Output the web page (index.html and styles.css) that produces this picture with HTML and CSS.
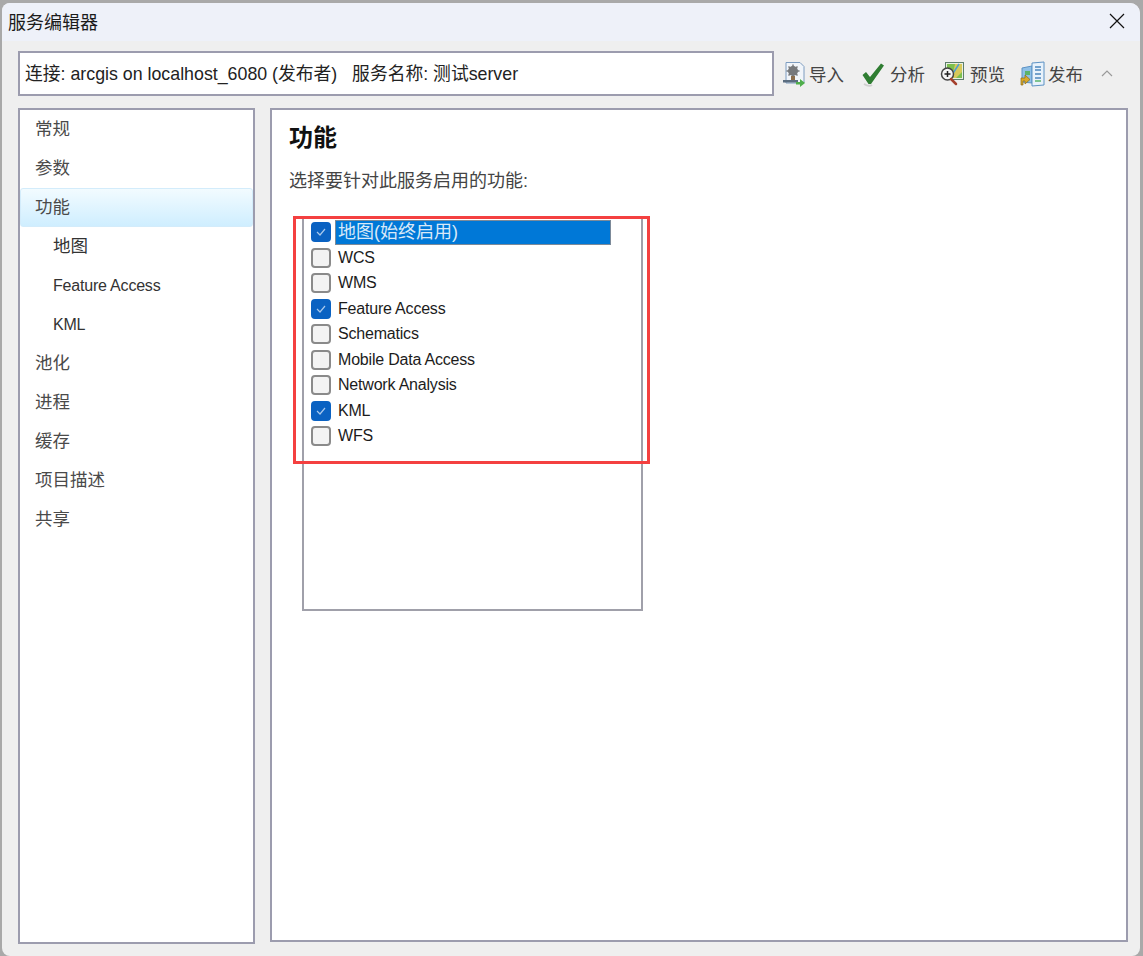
FILE: index.html
```html
<!DOCTYPE html>
<html lang="zh-CN">
<head>
  <meta charset="UTF-8">
  <title>服务编辑器</title>
  <link rel="stylesheet" href="styles.css">
</head>
<body>
  <div class="window">
    <!-- 标题栏 -->
    <div class="titlebar">
      <span class="title">服务编辑器</span>
      <svg class="close" width="16" height="16" viewBox="0 0 16 16"><path d="M1 1 L15 15 M15 1 L1 15" stroke="#111" stroke-width="1.2" fill="none"/></svg>
    </div>

    <div class="content">
      <!-- 连接信息和工具栏 -->
      <div class="topbar">
        <div class="conn">连接: arcgis on localhost_6080 (发布者)&nbsp;&nbsp; 服务名称: 测试server</div>
        <div class="tools">
          <div class="tool tool-import">
            <svg width="24" height="26" viewBox="0 0 24 26">
              <path d="M4 1.5 H18 L22 5.5 V22 H4 Z" fill="#f1f5fa" stroke="#7d9cc0"/>
              <circle cx="11" cy="10" r="5" fill="#77797c"/>
              <circle cx="11" cy="10" r="2" fill="#d8dadc"/>
              <path d="M11 3.5 V16.5 M4.500 10 H17.500 M6.500 5.500 L15.500 14.500 M15.500 5.500 L6.500 14.500" stroke="#77797c" stroke-width="1.500"/>
              <rect x="9" y="15" width="4" height="4" fill="#8d6e4c"/>
              <rect x="1" y="19" width="15" height="2.500" fill="#5b6d80"/>
              <path d="M14 21 H18 V18 L23 22 L18 26 V23.500 H14 Z" fill="#4fae4b"/>
            </svg>
            <span>导入</span>
          </div>
          <div class="tool tool-check">
            <svg width="24" height="26" viewBox="0 0 24 26">
              <path d="M1.500 14 L5 11 L9 16 L20 2.500 L23 4.500 L10 23 H7.500 Z" fill="#2f7d32"/>
              <path d="M3 23 Q8 26 11 24" stroke="#cfcfcf" stroke-width="2" fill="none"/>
            </svg>
            <span>分析</span>
          </div>
          <div class="tool tool-preview">
            <svg width="25" height="26" viewBox="0 0 25 26">
              <rect x="5.500" y="1.500" width="18" height="17" fill="#e9f0e4" stroke="#5d7d6b"/>
              <path d="M7 3 H22 V17 H7 Z" fill="#7cc04e"/>
              <path d="M15 3 H22 V11 L16 17 H12 Z" fill="#d7c95a"/>
              <path d="M19 3 L10 17" stroke="#4c9ed0" stroke-width="1.500"/>
              <circle cx="7.500" cy="13" r="6" fill="#f5f5f5" stroke="#444" stroke-width="1.500"/>
              <path d="M4.500 13 H10.500 M7.500 10 V16" stroke="#222" stroke-width="1.500"/>
              <path d="M11 18 L16 23" stroke="#a5402d" stroke-width="2.500" stroke-linecap="round"/>
            </svg>
            <span>预览</span>
          </div>
          <div class="tool tool-publish">
            <svg width="26" height="26" viewBox="0 0 26 26">
              <path d="M2 7 L12 5 V22 L2 21 Z" fill="#8fc0e8" stroke="#5d92c4"/>
              <rect x="5" y="10" width="5" height="4" fill="#5bb36a"/>
              <path d="M12 2 L24 1 V24 L12 25 Z" fill="#e8f2fb" stroke="#5d92c4"/>
              <path d="M15 6 H21 M15 9 H21 M15 13 H21 M15 17 H21" stroke="#4c86bd" stroke-width="1.500"/>
              <path d="M15 20 H21" stroke="#5bb36a" stroke-width="1.500"/>
              <path d="M1 17 H5 V14 L10 18.500 L5 23 V20 H3 V24 H1 Z" fill="#d9a92b" stroke="#8a6a16" stroke-width=".7"/>
            </svg>
            <span>发布</span>
          </div>
          <svg class="collapse" width="12" height="7" viewBox="0 0 12 7"><path d="M1 6 L6 1 L11 6" stroke="#9a9a9a" stroke-width="1.200" fill="none"/></svg>
        </div>
      </div>

      <div class="panes">
        <!-- 左侧导航 -->
        <ul class="nav">
          <li>常规</li>
          <li>参数</li>
          <li class="active">功能</li>
          <li class="sub sub-cn">地图</li>
          <li class="sub">Feature Access</li>
          <li class="sub">KML</li>
          <li>池化</li>
          <li>进程</li>
          <li>缓存</li>
          <li>项目描述</li>
          <li>共享</li>
        </ul>

        <!-- 功能面板 -->
        <div class="main">
          <h1>功能</h1>
          <p class="hint">选择要针对此服务启用的功能:</p>
          <div class="list">
            <div class="row"><span class="box on"><svg width="12" height="10" viewBox="0 0 12 10"><path d="M2 5 L5 8 L10 2" stroke="#a9c9ec" stroke-width="1.200" fill="none"/></svg></span><span class="label selected">地图(始终启用)</span></div>
            <div class="row"><span class="box"></span><span class="label">WCS</span></div>
            <div class="row"><span class="box"></span><span class="label">WMS</span></div>
            <div class="row"><span class="box on"><svg width="12" height="10" viewBox="0 0 12 10"><path d="M2 5 L5 8 L10 2" stroke="#a9c9ec" stroke-width="1.200" fill="none"/></svg></span><span class="label">Feature Access</span></div>
            <div class="row"><span class="box"></span><span class="label">Schematics</span></div>
            <div class="row"><span class="box"></span><span class="label">Mobile Data Access</span></div>
            <div class="row"><span class="box"></span><span class="label">Network Analysis</span></div>
            <div class="row"><span class="box on"><svg width="12" height="10" viewBox="0 0 12 10"><path d="M2 5 L5 8 L10 2" stroke="#a9c9ec" stroke-width="1.200" fill="none"/></svg></span><span class="label">KML</span></div>
            <div class="row"><span class="box"></span><span class="label">WFS</span></div>
            <!-- 红色标注框 -->
            <div class="redbox"></div>
          </div>
        </div>
      </div>
    </div>
  </div>
</body>
</html>
```

FILE: styles.css
```css
* { box-sizing: border-box; margin: 0; padding: 0; }

html, body { height: 100%; }

body {
  font-family: "Liberation Sans", "Noto Sans CJK SC", sans-serif;
  background: #a9a9a9;
  padding: 3px 3px 0 2px;
  overflow: hidden;
  color: #222;
}

.window {
  height: 100%;
  background: #efefef;
  border-radius: 8px 10px 8px 8px;
  overflow: hidden;
  display: flex;
  flex-direction: column;
}

/* 标题栏 */
.titlebar {
  height: 38px;
  flex: none;
  background: #eef1f9;
  display: flex;
  align-items: center;
  justify-content: space-between;
  padding: 0 15px 2px 6px;
}

.title { font-size: 18px; color: #1b1b1b; }

.content {
  flex: 1;
  padding: 10px 12px 12px 16px;
  display: flex;
  flex-direction: column;
  gap: 12px;
  min-height: 0;
}

/* 顶部 */
.topbar {
  display: flex;
  align-items: center;
  height: 45px;
  flex: none;
}

.conn {
  width: 756px;
  height: 45px;
  background: #fff;
  border: 2px solid #9c9cae;
  padding-left: 5px;
  font-size: 17.800px;
  line-height: 42px;
  color: #222;
  white-space: nowrap;
}

.tools {
  display: flex;
  align-items: center;
  margin-left: 8px;
}

.tool {
  display: flex;
  align-items: center;
  font-size: 17.500px;
  color: #444;
  gap: 3px;
}

.tool-check { margin-left: 17px; gap: 5px; }
.tool-preview { margin-left: 15px; gap: 5px; }
.tool-publish { margin-left: 15px; gap: 2px; }

.collapse { margin-left: 18px; }

/* 下方两栏 */
.panes {
  flex: 1;
  display: flex;
  gap: 15px;
  min-height: 0;
}

.nav {
  width: 237px;
  flex: none;
  background: #fff;
  border: 2px solid #9c9cae;
  list-style: none;
}

.nav li {
  height: 39px;
  line-height: 39px;
  padding-left: 15px;
  font-size: 17.500px;
  color: #4a4a4a;
}

.nav li.sub { padding-left: 33px; color: #333; font-size: 16px; letter-spacing: -0.2px; }

.nav li.sub-cn { font-size: 17.500px; letter-spacing: 0; }

.nav li.active {
  background: linear-gradient(#f2fbff, #cfeeff);
  border: 1px solid #d3ecfb;
  border-radius: 3px;
  line-height: 37px;
  padding-left: 14px;
}

.main {
  flex: 1;
  height: 834px;
  background: #fff;
  border: 2px solid #9c9cae;
  padding: 13px 17px;
}

.main h1 {
  font-size: 24px;
  line-height: 30px;
  color: #111;
}

.hint {
  margin-top: 16px;
  font-size: 18px;
  line-height: 24px;
  color: #444;
}

/* 复选列表 */
.list {
  position: relative;
  width: 341px;
  height: 395px;
  margin: 23px 0 0 13px;
  border: 2px solid #a0a0aa;
  border-top: none;
  padding-top: 3.500px;
}

.row {
  height: 25.500px;
  display: flex;
  align-items: center;
  padding-left: 7px;
}

.box {
  width: 20px;
  height: 20px;
  flex: none;
  background: #f3f3f3;
  border: 2px solid #8a8a8a;
  border-radius: 4px;
  display: flex;
  align-items: center;
  justify-content: center;
}

.box.on { background: #0a62c2; border-color: #0a62c2; }

.label {
  margin-left: 7px;
  font-size: 16px;
  letter-spacing: -0.2px;
  color: #1c1c1c;
  white-space: nowrap;
}

.label.selected {
  margin-left: 4px;
  width: 276px;
  height: 25px;
  line-height: 23px;
  padding-left: 2px;
  background: #0078d7;
  border: 1px solid #7c8a99;
  color: #d8e9f8;
  font-size: 18px;
  letter-spacing: 0;
}

.redbox {
  position: absolute;
  left: -11px;
  top: 0;
  width: 357px;
  height: 248px;
  border: 3px solid #f44040;
}
```
